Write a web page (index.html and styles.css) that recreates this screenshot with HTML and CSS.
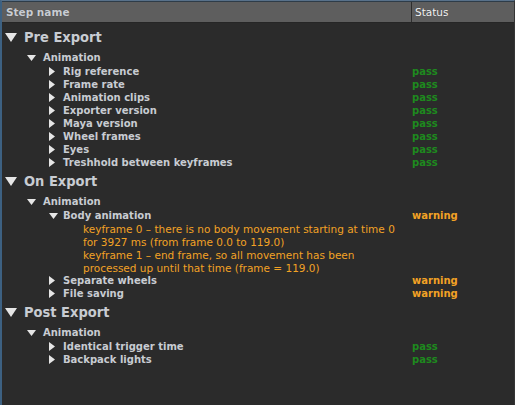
FILE: index.html
```html
<!DOCTYPE html>
<html>
<head>
<meta charset="utf-8">
<link rel="stylesheet" href="styles.css">
</head>
<body>
<div class="frame">
  <div class="header">
    <div class="hcell name">Step name</div>
    <div class="hcell status">Status</div>
  </div>
  <div class="list">
    <div class="row sec"><div class="name"><span class="tw"><svg width="12" height="9" viewBox="0 0 12 9"><path d="M0 0H12L6 9Z"/></svg></span>Pre Export</div><div class="st"></div></div>
    <div class="row grp"><div class="name"><span class="tw"><svg width="9" height="6" viewBox="0 0 9 6"><path d="M0 0H9L4.5 6Z"/></svg></span>Animation</div><div class="st"></div></div>
    <div class="row item"><div class="name"><span class="tw"><svg width="6" height="9" viewBox="0 0 6 9"><path d="M0 0L6 4.5L0 9Z"/></svg></span>Rig reference</div><div class="st pass">pass</div></div>
    <div class="row item"><div class="name"><span class="tw"><svg width="6" height="9" viewBox="0 0 6 9"><path d="M0 0L6 4.5L0 9Z"/></svg></span>Frame rate</div><div class="st pass">pass</div></div>
    <div class="row item"><div class="name"><span class="tw"><svg width="6" height="9" viewBox="0 0 6 9"><path d="M0 0L6 4.5L0 9Z"/></svg></span>Animation clips</div><div class="st pass">pass</div></div>
    <div class="row item"><div class="name"><span class="tw"><svg width="6" height="9" viewBox="0 0 6 9"><path d="M0 0L6 4.5L0 9Z"/></svg></span>Exporter version</div><div class="st pass">pass</div></div>
    <div class="row item"><div class="name"><span class="tw"><svg width="6" height="9" viewBox="0 0 6 9"><path d="M0 0L6 4.5L0 9Z"/></svg></span>Maya version</div><div class="st pass">pass</div></div>
    <div class="row item"><div class="name"><span class="tw"><svg width="6" height="9" viewBox="0 0 6 9"><path d="M0 0L6 4.5L0 9Z"/></svg></span>Wheel frames</div><div class="st pass">pass</div></div>
    <div class="row item"><div class="name"><span class="tw"><svg width="6" height="9" viewBox="0 0 6 9"><path d="M0 0L6 4.5L0 9Z"/></svg></span>Eyes</div><div class="st pass">pass</div></div>
    <div class="row item"><div class="name"><span class="tw"><svg width="6" height="9" viewBox="0 0 6 9"><path d="M0 0L6 4.5L0 9Z"/></svg></span>Treshhold between keyframes</div><div class="st pass">pass</div></div>

    <div class="row sec"><div class="name"><span class="tw"><svg width="12" height="9" viewBox="0 0 12 9"><path d="M0 0H12L6 9Z"/></svg></span>On Export</div><div class="st"></div></div>
    <div class="row grp"><div class="name"><span class="tw"><svg width="9" height="6" viewBox="0 0 9 6"><path d="M0 0H9L4.5 6Z"/></svg></span>Animation</div><div class="st"></div></div>
    <div class="row item"><div class="name"><span class="tw"><svg width="9" height="6" viewBox="0 0 9 6"><path d="M0 0H9L4.5 6Z"/></svg></span>Body animation</div><div class="st warn">warning</div></div>
    <div class="row msg"><div class="name">keyframe 0 – there is no body movement starting at time 0</div><div class="st"></div></div>
    <div class="row msg"><div class="name">for 3927 ms (from frame 0.0 to 119.0)</div><div class="st"></div></div>
    <div class="row msg"><div class="name">keyframe 1 – end frame, so all movement has been</div><div class="st"></div></div>
    <div class="row msg"><div class="name">processed up until that time (frame = 119.0)</div><div class="st"></div></div>
    <div class="row item"><div class="name"><span class="tw"><svg width="6" height="9" viewBox="0 0 6 9"><path d="M0 0L6 4.5L0 9Z"/></svg></span>Separate wheels</div><div class="st warn">warning</div></div>
    <div class="row item"><div class="name"><span class="tw"><svg width="6" height="9" viewBox="0 0 6 9"><path d="M0 0L6 4.5L0 9Z"/></svg></span>File saving</div><div class="st warn">warning</div></div>

    <div class="row sec"><div class="name"><span class="tw"><svg width="12" height="9" viewBox="0 0 12 9"><path d="M0 0H12L6 9Z"/></svg></span>Post Export</div><div class="st"></div></div>
    <div class="row grp"><div class="name"><span class="tw"><svg width="9" height="6" viewBox="0 0 9 6"><path d="M0 0H9L4.5 6Z"/></svg></span>Animation</div><div class="st"></div></div>
    <div class="row item"><div class="name"><span class="tw"><svg width="6" height="9" viewBox="0 0 6 9"><path d="M0 0L6 4.5L0 9Z"/></svg></span>Identical trigger time</div><div class="st pass">pass</div></div>
    <div class="row item"><div class="name"><span class="tw"><svg width="6" height="9" viewBox="0 0 6 9"><path d="M0 0L6 4.5L0 9Z"/></svg></span>Backpack lights</div><div class="st pass">pass</div></div>
  </div>
</div>
</body>
</html>
```

FILE: styles.css
```css
html, body {
  margin: 0;
  padding: 0;
  background: #2b2b2b;
}
body {
  width: 515px;
  height: 405px;
  overflow: hidden;
  font-family: "DejaVu Sans", sans-serif;
}
.frame {
  box-sizing: border-box;
  height: 405px;
  border-top: 1px solid #58718a;
  border-left: 2px solid #3d6182;
  border-right: 1px solid #353535;
  background: #2b2b2b;
}
.header {
  display: grid;
  grid-template-columns: 409px 1fr;
  border-top: 1px solid #2e3c48;
  border-bottom: 1px solid #262626;
  background: #5e5e5e;
  box-sizing: border-box;
  height: 22px;
}
.hcell {
  color: #f2f2f2;
  font-size: 10.5px;
  line-height: 20px;
  padding-left: 4px;
  text-shadow: 0 0 1px rgba(0,0,0,0.3);
}
.hcell.status {
  border-left: 1px solid #2e2e2e;
  padding-left: 3px;
}
.list {
  padding-top: 2px;
}
.row {
  display: grid;
  grid-template-columns: 409px 1fr;
  align-items: center;
}
.name {
  display: flex;
  align-items: center;
  white-space: nowrap;
  color: #c8ccd2;
  font-weight: bold;
}
.tw {
  display: flex;
  align-items: center;
}
.tw svg {
  fill: #e6e6e6;
  display: block;
}
.sec {
  box-sizing: border-box;
  height: 25px;
  padding-bottom: 1px;
  font-size: 14.5px;
  font-family: "DejaVu Sans Condensed", "DejaVu Sans", sans-serif;
}
.sec .name { padding-left: 3px; }
.sec .tw { width: 19px; }
.grp {
  height: 15px;
  font-size: 10px;
}
.grp .name { padding-left: 25px; }
.grp .tw { width: 16px; }
.item {
  height: 13px;
  font-size: 10px;
}
.item .name { padding-left: 47px; }
.item .tw { width: 14px; }
.msg {
  height: 13px;
  font-size: 10.5px;
}
.msg .name {
  padding-left: 81px;
  font-weight: normal;
  color: #f2a225;
}
.st {
  font-size: 10px;
  font-weight: bold;
  padding-left: 1px;
  font-family: "DejaVu Sans", sans-serif;
}
.pass { color: #1e8a1e; }
.warn { color: #f2a225; }
```
